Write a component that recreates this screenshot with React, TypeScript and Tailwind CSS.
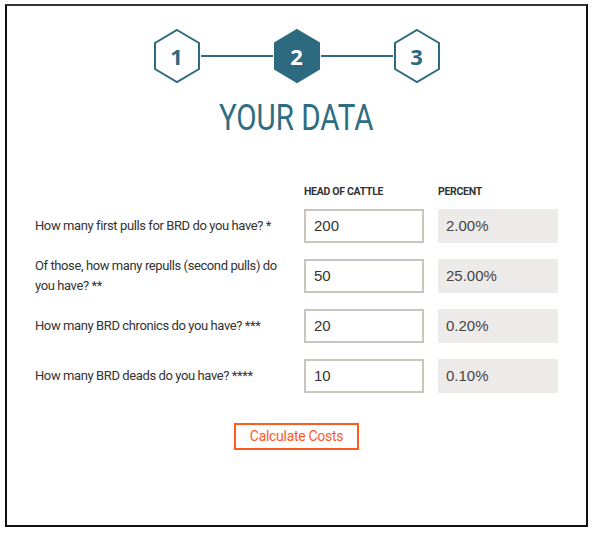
import React from 'react';

const rows = [
  { label: 'How many first pulls for BRD do you have? *', head: '200', pct: '2.00%' },
  { label: 'Of those, how many repulls (second pulls) do you have? **', head: '50', pct: '25.00%' },
  { label: 'How many BRD chronics do you have? ***', head: '20', pct: '0.20%' },
  { label: 'How many BRD deads do you have? ****', head: '10', pct: '0.10%' },
];

const Hex: React.FC<{ n: number; active?: boolean }> = ({ n, active }) => (
  <div className="relative w-[48px] h-[56px] flex items-center justify-center">
    <svg width="48" height="56" viewBox="0 0 48 56" className="absolute inset-0">
      <polygon
        points="24,2 46,15 46,41 24,54 2,41 2,15"
        fill={active ? '#2d6a7f' : '#ffffff'}
        stroke="#2d6a7f"
        strokeWidth="2"
      />
    </svg>
    <span
      className={`relative text-[22px] font-bold ${active ? 'text-white' : 'text-[#2d6a7f]'}`}
      style={{ fontFamily: '"Open Sans", sans-serif' }}
    >
      {n}
    </span>
  </div>
);

export default function App() {
  return (
    <div className="w-[593px] h-[533px] bg-white pt-[4px] pl-[5px]">
      <div className="w-[583px] h-[523px] border-2 border-[#111] border-t-[#333] flex flex-col items-center font-['Liberation_Sans',sans-serif]">
        <div className="flex items-center mt-[22px]">
          <Hex n={1} />
          <div className="w-[72px] h-[2px] bg-[#2d6a7f]" />
          <Hex n={2} active />
          <div className="w-[72px] h-[2px] bg-[#2d6a7f]" />
          <Hex n={3} />
        </div>
        <h1 className="mt-[14px] text-[36px] leading-[40px] text-[#2f6d82] font-['Roboto',sans-serif] font-normal scale-x-[0.82]">
          YOUR DATA
        </h1>

        <div className="self-start ml-[28px] mt-[46px] w-[524px]">
          <div className="flex text-[10.5px] font-bold text-[#333] tracking-[-0.3px] font-['Roboto',sans-serif]">
            <div className="w-[269px]" />
            <div className="w-[134px]">HEAD OF CATTLE</div>
            <div>PERCENT</div>
          </div>
          <div className="mt-[9px] flex flex-col gap-[16px]">
            {rows.map((r) => (
              <div key={r.head} className="flex items-center h-[34px]">
                <div className="w-[269px] pr-[14px] text-[13px] leading-[20px] text-[#333] tracking-[-0.4px] font-['Roboto',sans-serif]">
                  {r.label}
                </div>
                <div className="w-[120px] h-[34px] border-2 border-[#c9c4bd] flex items-center px-[8px] text-[15px] text-[#333]">
                  {r.head}
                </div>
                <div className="ml-[14px] w-[120px] h-[34px] bg-[#edebe9] flex items-center px-[8px] text-[15px] text-[#444]">
                  {r.pct}
                </div>
              </div>
            ))}
          </div>
        </div>

        <button className="mt-[30px] border-2 border-[#ff5a1f] text-[#ff5a1f] text-[14px] px-[14px] h-[27px] leading-[23px] font-['Roboto',sans-serif] tracking-[-0.3px]">
          Calculate Costs
        </button>
      </div>
    </div>
  );
}
